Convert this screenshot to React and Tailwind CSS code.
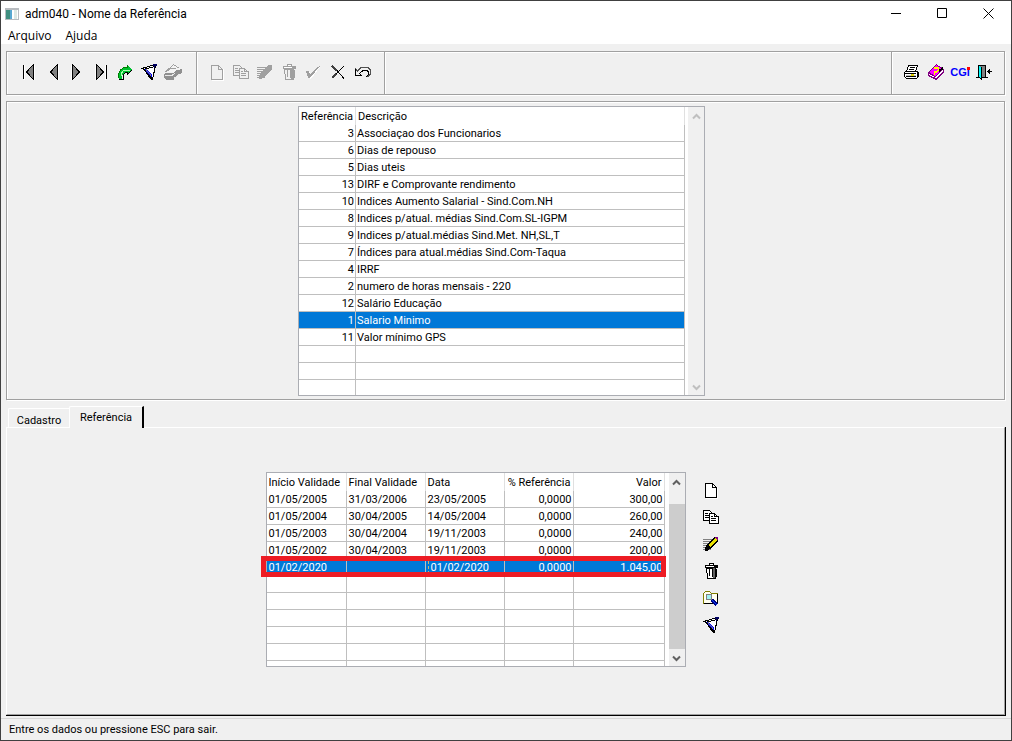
import clsx from 'clsx';

const REFERENCES = [
  ['3', 'Associaçao dos Funcionarios'],
  ['6', 'Dias de repouso'],
  ['5', 'Dias uteis'],
  ['13', 'DIRF e Comprovante rendimento'],
  ['10', 'Indices Aumento Salarial - Sind.Com.NH'],
  ['8', 'Indices p/atual. médias Sind.Com.SL-IGPM'],
  ['9', 'Indices p/atual.médias Sind.Met. NH,SL,T'],
  ['7', 'Índices para atual.médias Sind.Com-Taqua'],
  ['4', 'IRRF'],
  ['2', 'numero de horas mensais - 220'],
  ['12', 'Salário Educação'],
  ['1', 'Salario Minimo'],
  ['11', 'Valor mínimo GPS'],
  ['', ''],
  ['', ''],
  ['', ''],
];

const VALUES = [
  ['01/05/2005', '31/03/2006', '23/05/2005', '0,0000', '300,00'],
  ['01/05/2004', '30/04/2005', '14/05/2004', '0,0000', '260,00'],
  ['01/05/2003', '30/04/2004', '19/11/2003', '0,0000', '240,00'],
  ['01/05/2002', '30/04/2003', '19/11/2003', '0,0000', '200,00'],
  ['01/02/2020', '', '01/02/2020', '0,0000', '1.045,00'],
  ['', '', '', '', ''],
  ['', '', '', '', ''],
  ['', '', '', '', ''],
  ['', '', '', '', ''],
  ['', '', '', '', ''],
  ['', '', '', '', ''],
];

const GROOVE = 'border border-[#a0a0a0] shadow-[1px_1px_0_#fff,inset_1px_1px_0_#fff]';

function Svg({ children }) {
  return (
    <svg width="18" height="18" viewBox="0 0 18 18" fill="none" shapeRendering="crispEdges" aria-hidden="true">
      {children}
    </svg>
  );
}

function ArrowIcon({ dir, bar }) {
  return (
    <Svg>
      <g transform={dir === 'right' ? 'translate(18 0) scale(-1 1)' : undefined}>
        {bar && <path d="M4.5 2v15" stroke="#fff" />}
        {bar && <path d="M3.5 2v14" stroke="#000" />}
        <path d="M14.5 2v15" stroke="#fff" />
        <path d="M13.5 1.5v15L6.5 9z" fill="#808080" stroke="#000" />
      </g>
    </Svg>
  );
}

function GoIcon() {
  return (
    <Svg>
      <path d="M3 16v-5l2-4 3-2h3V2l5 5-5 5V9H9l-3 3v4z" fill="#00c030" />
      <path d="M2.5 15v-4l2-4 3.5-2.5h3V2" stroke="#008000" />
      <path d="M5 13v-2l2-3 4-1h3" stroke="#b0ffb0" />
      <path d="M3 16.500h4V12l3-3h1v3l5-5" stroke="#000" />
    </Svg>
  );
}

function FilterIcon() {
  return (
    <Svg>
      <path d="M1 6l15-4-4 14z" fill="#fff" />
      <path d="M4 6h3l5 6v5z" fill="#0000ff" />
      <path d="M1 5h2l3 3 7 8v1h-2L6 10z" fill="#000" />
      <path d="M1 5.5l15-4M3 6.5l12-3" stroke="#000" />
      <path d="M6 6.5l5 6" stroke="#808080" />
      <path d="M15.5 3l-3 13" stroke="#000" />
      <path d="M13 1h4v2h-2v2h-1V3h-1z" fill="#000060" />
    </Svg>
  );
}

function EraserIcon() {
  return (
    <Svg>
      <path d="M0 11l2-1h6l4-3 6-1v4l-4 2-3 3-2 2H2l-2-2z" fill="#909090" />
      <path d="M1 8l4-4 4-3h2l5 4v2l-3-1-3 4-3-1z" fill="#f4f4f4" />
      <path d="M1.5 9l8-7.5 6 4M4 8l3-3 5 1" stroke="#a0a0a0" />
      <path d="M1 12.5h7l3-2.5M10 15.500l5-4" stroke="#e8e8e8" />
    </Svg>
  );
}

function PageIcon({ color = '#000', paper = '#fff' }) {
  return (
    <Svg>
      <path d="M4 17.5h11.5V6" stroke="#fff" />
      <path d="M3.5 2.5h7l4 4v10h-11z" fill={paper} stroke={color} />
      <path d="M10.5 2.5v4h4" stroke={color} />
    </Svg>
  );
}

function CopyIcon({ color = '#000', paper = '#fff' }) {
  return (
    <Svg>
      <path d="M1.5 2.5h6l3 3v7h-9z" fill={paper} stroke={color} />
      <path d="M3 5.5h3M3 7.5h4M3 9.5h4" stroke={color} />
      <path d="M7.5 5.5h5l3.5 3.5v6.5H7.5z" fill={paper} stroke={color} />
      <path d="M12.5 5.5v3h4M9 8.5h2M9 10.5h5M9 12.5h5" stroke={color} />
    </Svg>
  );
}

function EditIcon({ off }) {
  return (
    <Svg>
      <path d="M1 4.5h9M1 6.5h8M1 8.5h6M1 10.5h5M1 12.5h4M1 14.5h8" stroke={off ? '#a0a0a0' : '#808080'} />
      <path d="M3 16v-3l2-4 8-7h3v4l-8 8-3 2z" fill={off ? '#a0a0a0' : '#000'} />
      {!off && <path d="M6 10l7-7 2 2-7 7z" fill="#e8e000" />}
      {!off && <path d="M13 2h3v3h-1z" fill="#800080" />}
    </Svg>
  );
}

function TrashIcon({ off }) {
  const ink = off ? '#a0a0a0' : '#000';
  return (
    <Svg>
      <path d="M3 3h4V1h5v2h4v3H3z" fill={ink} />
      <path d="M8 2.5h3M4 4.5h8" stroke="#fff" />
      <path d="M4.5 6.5h9V16H5.5z" fill={off ? '#f0f0f0' : '#fff'} stroke={ink} />
      <path d="M7.5 7v7M10.5 7v8" stroke={ink} />
      <path d="M12 6v10" stroke={off ? '#a0a0a0' : '#606060'} strokeWidth="2" />
      <path d="M5 16.5h9M14.5 7v8" stroke={ink} />
    </Svg>
  );
}

function CheckIcon() {
  return (
    <Svg>
      <path d="M3 9h3l1 3 7-7 2-1-9 12H6z" fill="#fff" />
      <path d="M2 8h3l1 3 7-7 3-1L6 15H4z" fill="#a0a0a0" />
    </Svg>
  );
}

function CancelIcon() {
  return (
    <Svg>
      <path d="M3 3.5l5 4 7 8M15 3l-5 5-7 7" stroke="#000" />
      <path d="M3 15l4-4M3 3l5 5" stroke="#404040" strokeWidth="2" />
    </Svg>
  );
}

function UndoIcon() {
  return (
    <Svg>
      <path d="M1.5 5.5v7h6l-2-2 4-3.5h3l2 2v3l-2 2" stroke="#000" />
      <path d="M1.500 5.500l2 2.500 4-4h6l3 3v4l-3 3" stroke="#505050" />
    </Svg>
  );
}

function PrinterIcon() {
  return (
    <Svg>
      <path d="M5.5 2.5h9l-2 6h-9z" fill="#fff" stroke="#000" />
      <path d="M7 4.5h5M6 6.5h5" stroke="#000" />
      <path d="M2.5 8.5h11l2 1v4l-2 2h-10l-2-2v-4z" fill="#fff" stroke="#000" />
      <path d="M2 10.5h11M3 13.5h10M14.5 8v6" stroke="#000" />
      <path d="M3 12h10" stroke="#c0c0c0" />
      <path d="M8 12h3" stroke="#e0d000" strokeWidth="2" />
    </Svg>
  );
}

function BookIcon() {
  return (
    <Svg>
      <path d="M1 10l8-9 8 5v3l-8 8-8-4z" fill="#800080" />
      <path d="M2 9l7-7 6 4-7 7z" fill="#ff00ff" />
      <path d="M2 11l6 3 8-7v1l-7 7-7-3z" fill="#fff" />
      <path d="M7 5h4l1 2-3 2H7M7 11h1" stroke="#ffff00" strokeWidth="1.500" />
      <path d="M12 8l4-3" stroke="#000" strokeWidth="2" />
    </Svg>
  );
}

function CgiIcon() {
  return (
    <span className="relative font-['Liberation_Sans',sans-serif] text-[11px] font-bold text-[#0000ff]">
      CGi
      <span className="absolute top-[3px] right-0 size-[3px] bg-[#ff0000]" />
    </span>
  );
}

function DoorIcon() {
  return (
    <Svg>
      <path d="M1 14.5h12" stroke="#000" />
      <path d="M3.5 2.5h7v12h-7z" fill="#808080" stroke="#000" />
      <path d="M3 3l3 1v12l-3-2z" fill="#00ffff" />
      <path d="M3.5 2v12l3 2V4" stroke="#000" />
      <path d="M12 8.5h5" stroke="#000" />
      <path d="M15 6v5l-3-2.5z" fill="#000" />
    </Svg>
  );
}

function SearchIcon() {
  return (
    <Svg>
      <path d="M1.5 14.5v-10l2-2h4l2 2h6v10z" fill="#fffff0" stroke="#808000" />
      <path d="M2 14.5h13.5V5" stroke="#000" />
      <circle cx="7" cy="8" r="3" fill="#a0f0f0" stroke="#808080" />
      <path d="M10 11l5 5" stroke="#000080" strokeWidth="3" />
      <path d="M10 11l5 5" stroke="#0040ff" strokeWidth="1" />
    </Svg>
  );
}

function ToolButton({ label, disabled, className = 'size-6', children }) {
  return (
    <button type="button" aria-label={label} disabled={disabled} className={clsx('flex items-center justify-center', className)}>
      {children}
    </button>
  );
}

function Chevron({ up, className }) {
  return (
    <svg width="9" height="7" viewBox="0 0 9 7" fill="none" className={className} aria-hidden="true">
      <path d={up ? 'M1 5.5L4.5 2 8 5.5' : 'M1 1.5L4.5 5 8 1.5'} stroke="currentColor" strokeWidth="2" />
    </svg>
  );
}

function ScrollBar({ thumb }) {
  return (
    <div className={clsx('flex w-4 flex-col items-center justify-between bg-[#f0f0f0]', thumb ? 'text-[#606060]' : 'text-[#bfbfbf]')}>
      <Chevron up className="mt-1.5 shrink-0" />
      {thumb && <div className="mt-[18px] mb-1.5 w-full flex-1 bg-[#cdcdcd]" />}
      <Chevron className="mb-1 shrink-0" />
    </div>
  );
}

function TitleBar() {
  return (
    <header className="bg-white text-xs text-black">
      <div className="flex h-[25px] items-center pl-1">
        <svg width="14" height="12" viewBox="0 0 14 12" shapeRendering="crispEdges" aria-hidden="true">
          <path d="M0 0h14v12H0z" fill="#b8bcc0" />
          <path d="M1 2h12v9H1z" fill="#fff" />
          <path d="M1 2h6v9H1z" fill="#3f8f80" />
          <path d="M5 2h2v9H5z" fill="#58a8d0" />
          <path d="M9 2h3v9H9z" fill="#dce8e4" />
        </svg>
        <h1 className="ml-1.5 flex-1">adm040 - Nome da Referência</h1>
        <button type="button" aria-label="Minimizar" className="flex h-full w-[46px] items-center justify-center">
          <svg width="11" height="11" stroke="#000"><path d="M0 5.5h10" /></svg>
        </button>
        <button type="button" aria-label="Maximizar" className="flex h-full w-[46px] items-center justify-center">
          <svg width="11" height="11" stroke="#000" fill="none"><path d="M.5 .5h9v9h-9z" /></svg>
        </button>
        <button type="button" aria-label="Fechar" className="flex h-full w-[46px] items-center justify-center">
          <svg width="11" height="11" stroke="#000"><path d="M.5 .5l10 10M10.5 .5l-10 10" /></svg>
        </button>
      </div>
      <nav className="flex h-[18px] items-center gap-3.5 pt-0.5 pl-[7px] font-['Open_Sans',sans-serif]">
        <button type="button">Arquivo</button>
        <button type="button">Ajuda</button>
      </nav>
    </header>
  );
}

function Toolbar() {
  const group = 'flex items-center border-r border-[#a0a0a0] pb-0.5 shadow-[1px_0_0_#fff]';
  return (
    <div className={clsx('mr-px flex h-11', GROOVE)}>
      <div className={clsx('w-[190px] pl-2.5', group)}>
        <ToolButton label="Primeiro"><ArrowIcon dir="left" bar /></ToolButton>
        <ToolButton label="Anterior"><ArrowIcon dir="left" /></ToolButton>
        <ToolButton label="Próximo"><ArrowIcon dir="right" /></ToolButton>
        <ToolButton label="Último"><ArrowIcon dir="right" bar /></ToolButton>
        <ToolButton label="Ir para"><GoIcon /></ToolButton>
        <ToolButton label="Filtrar"><FilterIcon /></ToolButton>
        <ToolButton label="Limpar filtro" disabled><EraserIcon /></ToolButton>
      </div>
      <div className={clsx('w-[188px] pl-2', group)}>
        <ToolButton label="Novo" disabled><PageIcon color="#a0a0a0" paper="#f0f0f0" /></ToolButton>
        <ToolButton label="Copiar" disabled><CopyIcon color="#a0a0a0" paper="#f0f0f0" /></ToolButton>
        <ToolButton label="Alterar" disabled><EditIcon off /></ToolButton>
        <ToolButton label="Excluir" disabled><TrashIcon off /></ToolButton>
        <ToolButton label="Confirmar" disabled><CheckIcon /></ToolButton>
        <ToolButton label="Cancelar" className="h-6 w-[26px]"><CancelIcon /></ToolButton>
        <ToolButton label="Desfazer"><UndoIcon /></ToolButton>
      </div>
      <div className={clsx('flex-1', group)} />
      <div className="flex w-28 items-center pb-0.5 pl-2">
        <ToolButton label="Imprimir"><PrinterIcon /></ToolButton>
        <ToolButton label="Ajuda"><BookIcon /></ToolButton>
        <ToolButton label="CGi"><CgiIcon /></ToolButton>
        <ToolButton label="Sair"><DoorIcon /></ToolButton>
      </div>
    </div>
  );
}

function Th({ className, children }) {
  return (
    <th className={clsx('h-[18px] border-r border-[#e0e0e0] px-0.5 pt-0.5 leading-4 font-normal whitespace-nowrap', className)}>
      {children}
    </th>
  );
}

function Td({ className, children }) {
  return (
    <td className={clsx('h-[17px] border-r border-b border-[#bfbfbf] pt-0.5 leading-[14px] whitespace-nowrap', className)}>
      {children}
    </td>
  );
}

function ReferenceTable() {
  return (
    <div className="flex h-[290px] gap-[3px] overflow-hidden border border-[#abadb3] bg-white">
      <div className="overflow-hidden">
        <table className="w-[386px] table-fixed border-separate border-spacing-0">
          <thead>
            <tr>
              <Th className="w-[57px] text-left">Referência</Th>
              <Th className="text-left">Descrição</Th>
            </tr>
          </thead>
          <tbody>
            {REFERENCES.map(([code, name], i) => (
              <tr key={i} className={clsx(code === '1' && 'bg-[#0078d7] text-white')}>
                <Td className="pr-px text-right">{code}</Td>
                <Td className="pl-px">{name}</Td>
              </tr>
            ))}
          </tbody>
        </table>
      </div>
      <ScrollBar />
    </div>
  );
}

function ValuesTable() {
  return (
    <div className="relative">
      <div className="flex h-[195px] gap-1 overflow-hidden border border-[#abadb3] bg-white">
        <div className="overflow-hidden">
          <table className="w-[398px] table-fixed border-separate border-spacing-0">
            <thead>
              <tr>
                <Th className="w-20 text-left">Início Validade</Th>
                <Th className="w-[79px] text-left">Final Validade</Th>
                <Th className="w-[79px] text-left">Data</Th>
                <Th className="w-[69px] text-right">% Referência</Th>
                <Th className="text-right">Valor</Th>
              </tr>
            </thead>
            <tbody>
              {VALUES.map(([start, end, date, percent, value], i) => (
                <tr key={i} className={clsx(i === 4 && 'bg-[#0078d7] text-white')}>
                  <Td className="pl-0.5">{start}</Td>
                  <Td className="pl-0.5">{end}</Td>
                  <Td className="pl-0.5">
                    <span className={clsx(i === 4 && 'border-l border-dashed border-[#c8b870] pl-0.5')}>{date}</span>
                  </Td>
                  <Td className="pr-px text-right">{percent}</Td>
                  <Td className="pr-px text-right">{value}</Td>
                </tr>
              ))}
            </tbody>
          </table>
        </div>
        <ScrollBar thumb />
      </div>
      {/* marks the new row */}
      <div className="pointer-events-none absolute top-[84px] -left-[5px] h-[21px] w-[405px] border-[5px] border-[#ed1c24]" />
    </div>
  );
}

export default function App() {
  return (
    <div className="flex min-h-screen flex-col border border-[#404040] bg-[#f0f0f0] font-[Roboto,sans-serif] text-[11px] text-black">
      <TitleBar />
      <main className="flex flex-1 flex-col px-[5px] pt-[7px] pb-0.5">
        <Toolbar />
        <section className={clsx('mt-1.5 mr-px flex justify-center pt-1 pr-2 pb-[3px]', GROOVE)}>
          <ReferenceTable />
        </section>
        <div role="tablist" className="mt-1.5 flex h-[21px] items-end pl-0.5">
          <button type="button" role="tab" aria-selected="false" className="h-[19px] w-[61px] rounded-tl-xs border-t border-l border-white pt-1">
            Cadastro
          </button>
          <button type="button" role="tab" aria-selected="true" className="relative -mb-px h-[22px] w-[75px] rounded-tl-xs border-t border-r-2 border-l border-t-white border-r-black border-l-white bg-[#f0f0f0] pt-0.5">
            Referência
          </button>
        </div>
        <section className="flex flex-1 border-r border-b border-black">
          <div className="flex flex-1 items-start justify-center gap-3 border border-t-white border-r-[#a0a0a0] border-b-[#a0a0a0] border-l-white pt-11 pr-[22px]">
            <ValuesTable />
            <div className="flex flex-col pt-1">
              <ToolButton label="Novo valor" className="h-[27px] w-[26px]"><PageIcon /></ToolButton>
              <ToolButton label="Copiar valor" className="h-[27px] w-[26px]"><CopyIcon /></ToolButton>
              <ToolButton label="Alterar valor" className="h-[27px] w-[26px]"><EditIcon /></ToolButton>
              <ToolButton label="Excluir valor" className="h-[27px] w-[26px]"><TrashIcon /></ToolButton>
              <ToolButton label="Consultar valor" className="h-[27px] w-[26px]"><SearchIcon /></ToolButton>
              <ToolButton label="Filtrar valores" className="h-[27px] w-[26px]"><FilterIcon /></ToolButton>
            </div>
          </div>
        </section>
      </main>
      <footer className="flex h-[22px] items-center border-t border-[#d7d7d7] pt-0.5 pl-2">
        Entre os dados ou pressione ESC para sair.
      </footer>
    </div>
  );
}
